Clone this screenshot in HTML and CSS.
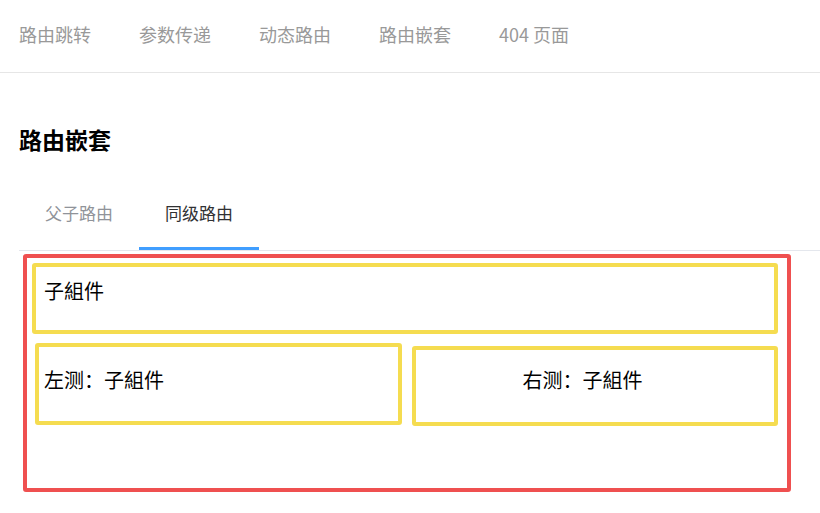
FILE: index.html
```html
<html>
    <head>
        <title>路由嵌套</title>
        <link rel="stylesheet" href="styles.css">
    </head>
    <body>
        <div class="nav">
            <a class="nav-item">路由跳转</a>
            <a class="nav-item">参数传递</a>
            <a class="nav-item">动态路由</a>
            <a class="nav-item">路由嵌套</a>
            <a class="nav-item">404 页面</a>
        </div>
        <h2 class="title">路由嵌套</h2>
        <div class="tabs">
            <a class="tab">父子路由</a>
            <a class="tab active">同级路由</a>
        </div>
        <div class="parent">
            <div class="child top">子組件</div>
            <div class="row">
                <div class="child left">左测：子組件</div>
                <div class="child right">右测：子組件</div>
            </div>
        </div>
    </body>
</html>
```

FILE: styles.css
```css
body {
    margin: 0;
    font-family: "Noto Sans CJK SC", "Noto Sans", sans-serif;
    color: #000;
}
/* 上部ナビ */
.nav {
    display: flex;
    height: 73px;
    box-sizing: border-box;
    padding: 20px 0 0 19px;
    border-bottom: 1px solid #e6e6e6;
}
.nav-item {
    width: 120px;
    font-size: 18px;
    line-height: 28px;
    color: #999;
}
.title {
    margin: 50px 0 0 19px;
    font-size: 23px;
    line-height: 32px;
    font-weight: bold;
}
/* タブ */
.tabs {
    display: flex;
    margin: 38px 0 0 19px;
    border-bottom: 1px solid #e4e7ed;
}
.tab {
    width: 120px;
    padding-bottom: 14px;
    border-bottom: 3px solid transparent;
    text-align: center;
    font-size: 17px;
    line-height: 40px;
    color: #909399;
}
.tab.active {
    color: #303133;
    border-bottom-color: #409eff;
}
/* 親コンポーネント */
.parent {
    width: 768px;
    height: 238px;
    box-sizing: border-box;
    margin: 3px 0 0 23px;
    border: 4px solid #ef5050;
    border-radius: 3px;
}
.child {
    box-sizing: border-box;
    border: 4px solid #f5dc50;
    border-radius: 3px;
    font-size: 20px;
    line-height: 28px;
}
.top {
    width: 746px;
    height: 71px;
    margin: 5px 0 0 5px;
    padding: 10px 0 0 8px;
}
.row {
    display: flex;
    align-items: flex-start;
    margin-top: 9px;
}
.left {
    width: 367px;
    height: 82px;
    margin-left: 8px;
    padding: 19px 0 0 5px;
}
.right {
    width: 366px;
    height: 80px;
    margin: 3px 0 0 10px;
    padding: 16px 25px 0 0;
    text-align: center;
}
```
